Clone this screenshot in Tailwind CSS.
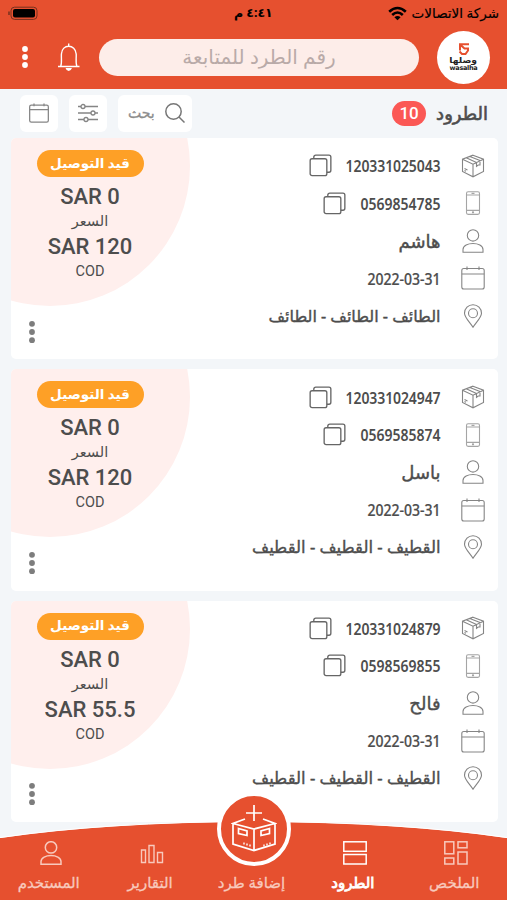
<!DOCTYPE html>
<html lang="ar">
<head>
<meta charset="utf-8">
<title>الطرود</title>
<script src="https://cdn.jsdelivr.net/npm/@tailwindcss/browser@4"></script>
</head>
<body class="w-[507px] h-[900px] overflow-hidden bg-[#f3f6f9] font-['Noto_Sans','DejaVu_Sans',sans-serif] text-[#4d4d4d]">
<svg class="hidden">
  <symbol id="box" viewBox="0 0 24 24"><path d="M12 1.2 22.500 5.2V17.5L12 22.8 1.5 17.5V5.2ZM1.5 5.2 12 10.2 22.500 5.2M12 10.2V22.8M5.2 3.8 15.5 8.6M8.8 2.5 19 6.6M15.5 8.6V12.4L17.2 11 19 11V6.6M3.5 14.5 6.5 15.9M3.5 16.5 5 17.3"/></symbol>
  <symbol id="phone" viewBox="0 0 24 24"><rect x="5.5" y=".8" width="13" height="22.6" rx="1.6"/><path d="M5.5 4H18.5M5.5 19.4H18.5M10.5 2.4H13.5"/><circle cx="12" cy="21.3" r=".6"/></symbol>
  <symbol id="user" viewBox="0 0 24 24"><circle cx="12" cy="6.4" r="5.7"/><path d="M2 23.3V20.6C2 12.5 22 12.5 22 20.6V23.3Z"/></symbol>
  <symbol id="cal" viewBox="0 0 24 24"><rect x=".8" y="2.5" width="22.4" height="20.5" rx="2"/><path d="M.8 8H23.2M6 .5V4M18 .5V4"/></symbol>
  <symbol id="pin" viewBox="0 0 24 24"><path d="M12 23.3C9.5 19 3.5 13.5 3.5 9.2A8.5 8.5 0 0 1 20.5 9.2C20.5 13.5 14.5 19 12 23.3Z"/><circle cx="12" cy="9.2" r="4.5"/></symbol>
  <symbol id="copy" viewBox="0 0 24 24"><rect x="1.2" y="5" width="17.4" height="17.6" rx="2"/><path d="M5 5V3.2A2 2 0 0 1 7 1.2H20.8A2 2 0 0 1 22.8 3.2V17A2 2 0 0 1 20.8 19H18.6"/></symbol>
</svg>

<header class="h-[88.5px] bg-[#e6502f]">
  <div class="flex h-[27px] items-center justify-between pl-2 pr-[8px] text-black">
    <svg class="h-[15px] w-[31px]" viewBox="0 0 31 15"><rect x="3" y="1.2" width="26" height="12.2" rx="3.5" fill="none" stroke="#74301f"/><rect x="5" y="3" width="22" height="8.6" rx="2"/><path d="M1 5.5V9" stroke="#74301f" stroke-width="1.5"/></svg>
    <span dir="rtl" class="ml-[80px] text-[12.500px] font-bold leading-none">٤:٤١ م</span>
    <div class="flex items-center gap-[5px]">
      <svg class="h-[15px] w-[19px]" viewBox="0 0 19 15" fill="none" stroke="black" stroke-width="2.6"><path d="M1.2 5.8Q9.5-1.8 17.8 5.8M4.2 9Q9.5 4 14.8 9"/><path d="M9.5 14.3 6.4 11.2Q9.5 8.8 12.6 11.2Z" fill="black" stroke="none"/></svg>
      <span dir="rtl" class="text-[13.500px] leading-none [-webkit-text-stroke:0.2px]">شركة الاتصالات</span>
    </div>
  </div>
  <div class="flex h-[60px] items-center pl-[21px] pr-[17px]">
    <svg class="h-6 w-2" viewBox="0 0 8 24" fill="white"><circle cx="4" cy="4" r="2.9"/><circle cx="4" cy="12" r="2.9"/><circle cx="4" cy="20" r="2.9"/></svg>
    <svg class="ml-7 h-7 w-6" viewBox="0 0 24 28" fill="none" stroke="white" stroke-width="1.4"><path d="M1 23.5H22.5M3.8 23C5 20 4.2 16 4.4 11 4.8 6 8 3.2 11.7 3.2S18.8 6 19.2 11C19.4 16 18.5 20 19.8 23M11.7 3V.5"/><path d="M8.5 25H15Q13.8 28 11.7 28 9.5 28 8.5 25Z" fill="white" stroke="none"/></svg>
    <div dir="rtl" class="ml-[18px] flex h-[37px] w-[320px] items-center justify-center rounded-full bg-[#fdede9] text-[20px] text-[#b9aaa8]"><span class="whitespace-nowrap">رقم الطرد للمتابعة</span></div>
    <div class="ml-[18px] flex size-[53px] flex-col items-center rounded-full bg-white pt-[12px] text-[#222]">
      <svg class="h-3 w-3 shrink-0" viewBox="0 0 12 12" fill="none" stroke="#e6502f" stroke-width="2"><path d="M11 1.3H2V7.500M2 1.500 6.500 5.500H10V7.500L7.500 11H4L1.500 8.500"/></svg>
      <span dir="rtl" class="mt-[1px] text-[8px] leading-[8px] font-bold scale-x-[1.150]">وصلها</span>
      <span class="mt-[1px] font-['DejaVu_Sans'] text-[6.5px] leading-[6px] font-bold tracking-[-0.3px]">wasalha</span>
    </div>
  </div>
</header>

<section class="flex h-[49.5px] items-center pl-5 pr-[19px]">
  <div class="flex h-[37px] w-[38px] items-center justify-center rounded-md bg-white"><svg class="size-5" fill="none" stroke="#858585" stroke-width="1.5"><use href="#cal"/></svg></div>
  <div class="ml-[11px] flex h-[37px] w-[38px] items-center justify-center rounded-md bg-white"><svg class="size-5" viewBox="0 0 20 20" fill="none" stroke="#858585" stroke-width="1.3"><path d="M0 3.5H3M7 3.5H20M0 10H13M17 10H20M0 16.5H6M10 16.5H20"/><circle cx="5" cy="3.5" r="2"/><circle cx="15" cy="10" r="2"/><circle cx="8" cy="16.5" r="2"/></svg></div>
  <div class="ml-[11px] flex h-[37px] w-[74px] items-center justify-between rounded-md bg-white pl-2.5 pr-[7px]"><span dir="rtl" class="text-[14px] leading-none text-[#8d8d8d] [-webkit-text-stroke:0.3px]">بحث</span><svg class="size-5" viewBox="0 0 20 20" fill="none" stroke="#777" stroke-width="1.5"><circle cx="8.5" cy="8.5" r="7.7"/><path d="M14 14 19.5 19.5"/></svg></div>
  <span class="ml-auto flex h-[25px] w-[34px] items-center justify-center rounded-full bg-[#fb5855] font-['Roboto'] text-[17px] font-medium text-white">10</span>
  <h1 dir="rtl" class="ml-[10px] text-[18px] leading-none [-webkit-text-stroke:0.6px]">الطرود</h1>
</section>

<main id="cards" class="flex flex-col gap-[10px] pl-[11px] pr-[9.500px]"></main>

<nav class="absolute inset-x-0 bottom-0 h-[80px]">
  <svg class="absolute inset-0 h-full w-full" viewBox="0 0 507 80"><path d="M0 18Q105 2.5 254 1.8 402 2.5 507 18V80H0Z" fill="#e6502f"/><path d="M0 17.6Q105 2.1 254 1.4 402 2.1 507 17.6" fill="none" stroke="#fff" stroke-width="1"/></svg>
  <div class="absolute left-[217px] top-[-28.5px] flex size-[74px] items-center justify-center rounded-full border-[4.5px] border-white bg-[#e6502f]">
    <svg class="h-[50px] w-[46px]" viewBox="0 0 46 50" fill="none" stroke="white" stroke-width="1.7"><path d="M23 1V17M15 9H31M14 15 2 19.500 23 25 44 19.500 32 15M2 19.500V40L23 46.500 44 40V19.500M23 25V46.500M7.5 24.500 16 27V31.500L7.5 29.500ZM38.500 24.500 30 27V31.500L38.500 29.500Z"/><path d="M13 38.500V40.500M16 39.500V41.500M19 40.500V42.500M33 40.500V42.500M36 39.500V41.500M39 38.500V40.500" stroke-width="1.400"/></svg>
  </div>
  <div dir="rtl" class="relative grid h-full grid-cols-5 pt-[21px] text-center text-[15px] leading-none text-[#f8c9bd] [-webkit-text-stroke:0.3px]">
    <div class="flex flex-col items-center gap-[10px]"><svg class="size-6" viewBox="0 0 24 24" fill="none" stroke="currentColor" stroke-width="1.5"><rect x=".8" y=".8" width="9" height="12"/><rect x="14" y=".8" width="9" height="6"/><rect x=".8" y="17" width="9" height="6"/><rect x="14" y="11" width="9" height="12"/></svg><span class="mr-1">الملخص</span></div>
    <div class="flex flex-col items-center gap-[10px] text-white"><svg class="size-6" viewBox="0 0 24 24" fill="none" stroke="currentColor" stroke-width="1.5"><rect x=".8" y=".8" width="22.4" height="9.5"/><rect x=".8" y="13.500" width="22.4" height="9.500"/></svg><span class="mr-1 [-webkit-text-stroke:0.8px]">الطرود</span></div>
    <div class="flex flex-col items-center pt-[34px]"><span class="mr-1">إضافة طرد</span></div>
    <div class="flex flex-col items-center gap-[10px]"><svg class="size-6" viewBox="0 0 24 24" fill="none" stroke="currentColor" stroke-width="1.4"><path d="M1.500 21.500V9H5.500V21.500ZM9 21.500V4.500H14V21.500ZM17.500 21.500V11.500H22.500V21.500Z"/></svg><span class="mr-1">التقارير</span></div>
    <div class="flex flex-col items-center gap-[10px]"><svg class="size-6" fill="none" stroke="currentColor" stroke-width="1.500"><use href="#user"/></svg><span class="mr-1">المستخدم</span></div>
  </div>
</nav>

<script>
const parcels = [
  ['120331025043', '0569854785', 'هاشم', 'الطائف - الطائف - الطائف', '120', 'text-[16px]'],
  ['120331024947', '0569585874', 'باسل', 'القطيف - القطيف - القطيف', '120', 'text-[16.500px]'],
  ['120331024879', '0598569855', 'فالح', 'القطيف - القطيف - القطيف', '55.5', 'text-[16.500px]']
];
const icon = name => `<svg class="size-6 shrink-0" fill="none" stroke="${name === 'phone' ? '#a5a5a5' : '#858585'}" stroke-width="1.1"><use href="#${name}"/></svg>`;
const copy = `<svg class="mr-[14px] size-[23px]" fill="none" stroke="#666" stroke-width="1.4"><use href="#copy"/></svg>`;
const row = (name, body) => `<div class="flex h-[37.5px] items-center gap-[20.500px]">${icon(name)}<div class="flex items-center">${body}</div></div>`;
const number = (n, tracking) => `<span class="text-[14px] font-semibold scale-y-[1.1] ${tracking}">${n}</span>${copy}`;
document.getElementById('cards').innerHTML = parcels.map(([id, phone, name, place, price, placeSize]) => `
<article class="relative flex h-[221.3px] justify-between overflow-hidden rounded-[5px] bg-white">
  <div class="absolute left-[-101px] top-[-112px] size-[280px] rounded-full bg-[#ffefed]"></div>
  <div class="relative flex w-[158px] flex-col items-center pt-[12px] font-['Roboto','DejaVu_Sans']">
    <span dir="rtl" class="flex h-[27px] w-[107px] items-center justify-center rounded-full bg-[#fea026] text-[13.500px] font-bold leading-none text-white">قيد التوصيل</span>
    <b class="mt-[6px] text-[22px] leading-[28px] font-medium">SAR 0</b>
    <span class="text-[14.500px] leading-[22px]">السعر</span>
    <b class="text-[22px] leading-[28px] font-medium">SAR ${price}</b>
    <span class="text-[14.500px] leading-[21px]">COD</span>
    <svg class="absolute left-[17px] top-[181.500px] h-6 w-2" viewBox="0 0 8 24" fill="#7d7d7d"><circle cx="4" cy="3.800" r="2.900"/><circle cx="4" cy="12" r="2.900"/><circle cx="4" cy="20.200" r="2.900"/></svg>
  </div>
  <div dir="rtl" class="relative flex flex-col pr-[12.500px] pt-[9px]">
    ${row('box', number(id, 'tracking-[-0.100px]'))}
    ${row('phone', number(phone, 'tracking-normal'))}
    ${row('user', `<span class="text-[18px] leading-none [-webkit-text-stroke:0.4px]">${name}</span>`)}
    ${row('cal', `<span dir="ltr" class="text-[14px] font-medium scale-y-[1.1] [-webkit-text-stroke:0.2px]">2022-03-31</span>`)}
    ${row('pin', `<span class="${placeSize} leading-none whitespace-nowrap [-webkit-text-stroke:0.4px]">${place}</span>`)}
  </div>
</article>`).join('');
</script>
</body>
</html>
